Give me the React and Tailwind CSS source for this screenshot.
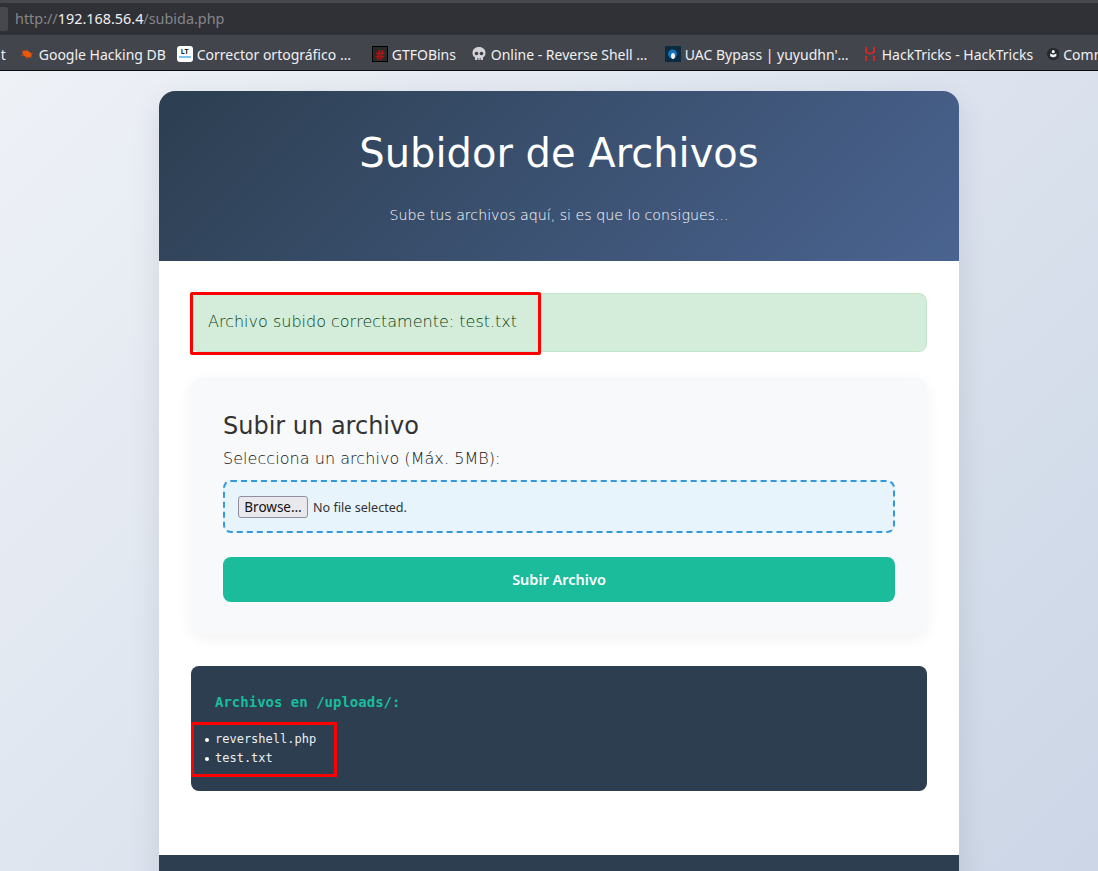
const bookmarks = [
  { label: "Google Hacking DB", icon: <BugIcon />, width: "w-[158px]" },
  { label: "Corrector ortográfico …", icon: <LtIcon />, width: "w-[195px]" },
  { label: "GTFOBins", icon: <GtfoIcon />, width: "w-[99px]" },
  { label: "Online - Reverse Shell …", icon: <SkullIcon />, width: "w-[194px]" },
  { label: "UAC Bypass | yuyudhn'…", icon: <UacIcon />, width: "w-[197px]" },
  { label: "HackTricks - HackTricks", icon: <HtIcon />, width: "w-[185px]" },
  { label: "Comm", icon: <CommIcon />, width: "w-[60px]" },
];

function BugIcon() {
  return (
    <svg viewBox="0 0 16 16" className="size-[16px]">
      <path d="M3 4l3 3M13 12l-3-3M2 10l3-1M14 7l-3 1M8 3l1 3M8 13l-1-3" stroke="#c2410c" strokeWidth="1" />
      <ellipse cx="8" cy="8" rx="5" ry="3" transform="rotate(25 8 8)" fill="#ea580c" />
    </svg>
  );
}

function LtIcon() {
  return (
    <div className="flex size-[16px] flex-col items-center rounded-[3px] bg-white pt-[2px]">
      <span className="text-[7px] font-bold leading-[7px] text-[#222]">LT</span>
      <span className="mt-[1px] h-[2px] w-[12px] bg-[#7cc4ec]" />
    </div>
  );
}

function GtfoIcon() {
  return (
    <div className="flex size-[16px] items-center justify-center border border-black bg-[#2a2a2a]">
      <span className="text-[15px] font-bold leading-none text-[#b01010]">#</span>
    </div>
  );
}

function SkullIcon() {
  return (
    <svg viewBox="0 0 16 16" className="size-[16px]">
      <path d="M8 1C4 1 1.500 3.500 1.500 7c0 2.200 1 3.600 2.500 4.400V14h8v-2.600c1.500-.8 2.500-2.200 2.500-4.400C14.500 3.500 12 1 8 1z" fill="#d4d4d8" />
      <circle cx="5.500" cy="7.500" r="1.800" fill="#3f4147" />
      <circle cx="10.500" cy="7.500" r="1.800" fill="#3f4147" />
      <path d="M6.500 12v2M8 12v2M9.500 12v2" stroke="#3f4147" strokeWidth=".6" />
    </svg>
  );
}

function UacIcon() {
  return (
    <svg viewBox="0 0 16 16" className="size-[16px]">
      <rect width="16" height="16" fill="#0b2b42" />
      <circle cx="7.500" cy="8" r="4.500" fill="#1273b8" />
      <ellipse cx="8" cy="10" rx="2" ry="3" fill="#f2f2f2" />
    </svg>
  );
}

function HtIcon() {
  return (
    <svg viewBox="0 0 16 16" className="size-[16px]">
      <path d="M4 1v5l4 2M12 1v5l-4 2M4 15v-5M12 15v-5" fill="none" stroke="#dc2626" strokeWidth="1.800" />
    </svg>
  );
}

function CommIcon() {
  return (
    <svg viewBox="0 0 16 16" className="size-[16px]">
      <circle cx="8" cy="8" r="8" fill="#26282c" />
      <circle cx="8" cy="5" r="2" fill="#f0f0f0" />
      <path d="M4 7.500l4 1.500 4-1.500V11l-4 1.500L4 11z" fill="#f0f0f0" />
    </svg>
  );
}

function BrowserBar() {
  return (
    <div className="shrink-0 font-['Noto_Sans',sans-serif]">
      <div className="h-[3px] bg-[#47484d]" />
      <div className="flex h-[32px] items-center bg-[#303136]">
        <div className="h-[24px] w-[8px] rounded-r-[3px] bg-[#47484d]" />
        <div className="ml-[7px] text-[14.400px] leading-none text-[#85868a]">
          http://<span className="text-[#f0f0f2]">192.168.56.4</span>/subida.php
        </div>
      </div>
      <div className="flex h-[36px] items-center overflow-hidden whitespace-nowrap border-b border-[#0c0c0e] bg-[#42454c] pt-[3px] text-[14px] text-[#f0f0f2]">
        <span className="ml-[-8px] mr-[13px] shrink-0">nt</span>
        {bookmarks.map((b) => (
          <div key={b.label} className={`flex shrink-0 items-center gap-[4px] ${b.width}`}>
            {b.icon}
            <span>{b.label}</span>
          </div>
        ))}
      </div>
    </div>
  );
}

export default function App() {
  return (
    <div className="flex h-[871px] w-[1098px] flex-col overflow-hidden font-['DejaVu_Sans',sans-serif]">
      <BrowserBar />
      <main className="flex-1 overflow-hidden bg-[linear-gradient(135deg,#f5f7fa_-20%,#c3cfe2_125%)] pt-[20px]">
        <div className="ml-[159px] w-[800px] overflow-hidden rounded-t-[16px] bg-white shadow-[0_10px_30px_rgba(0,0,0,0.1)]">
          <header className="h-[170px] bg-[linear-gradient(135deg,#2c3e50,#4a6491)] pt-[32px] text-center text-white">
            <h1 className="text-[40px] leading-[60px]">Subidor de Archivos</h1>
            <p className="mt-[20px] text-[14.200px] font-extralight leading-[24px]">Sube tus archivos aquí, si es que lo consigues...</p>
          </header>

          <div className="px-[32px] pt-[32px]">
            <div className="relative flex h-[59px] items-center rounded-[8px] border border-[#c3e6cb] bg-[#d4edda] px-[16px] pb-[2px] text-[16px] font-extralight text-[#063d12]">
              Archivo subido correctamente: test.txt
              <div className="absolute top-[-2px] left-[-2px] h-[63px] w-[351px] rounded-[2px] border-[3px] border-[#ff0000]" />
            </div>

            <section className="mt-[25px] h-[257px] rounded-[12px] bg-[#f8f9fa] px-[32px] pt-[33px] shadow-[0_5px_15px_rgba(0,0,0,0.05)]">
              <h2 className="text-[24px] leading-[32px] text-[#333]">Subir un archivo</h2>
              <label className="mt-[3px] block text-[16px] font-extralight leading-[28px] tracking-[0.050px] text-[#111]">Selecciona un archivo (Máx. 5MB):</label>
              <div className="mt-[7px] flex h-[53px] items-center rounded-[8px] border-2 border-dashed border-[#3498db] bg-[#e8f4fc] px-[13px] font-['Noto_Sans',sans-serif] text-[12.600px] text-[#333]">
                <button className="h-[22px] w-[70px] rounded-[3px] border border-[#8f8f9d] bg-[#e9e9ed] pt-[3px] text-[13.500px] leading-none text-[#111]">Browse…</button>
                <span className="ml-[5px] mt-[3px]">No file selected.</span>
              </div>
              <button className="mt-[24px] h-[45px] w-full rounded-[8px] bg-[#1abc9c] font-['Noto_Sans',sans-serif] text-[14.500px] font-semibold text-white">Subir Archivo</button>
            </section>

            <section className="relative mt-[32px] h-[125px] rounded-[8px] bg-[#2c3e50] px-[24px] pt-[27px] font-['DejaVu_Sans_Mono',monospace]">
              <h3 className="text-[14px] font-bold leading-[18px] text-[#1abc9c]">Archivos en /uploads/:</h3>
              <ul className="ml-[-10px] mt-[19px] text-[12px] leading-[19px] text-[#ecf0f1]">
                {["revershell.php", "test.txt"].map((name) => (
                  <li key={name} className="flex items-center gap-[6px]">
                    <span className="size-[4px] rounded-full bg-white" />
                    {name}
                  </li>
                ))}
              </ul>
              <div className="absolute top-[56px] left-[0px] h-[55px] w-[146px] border-[3px] border-[#ff0000]" />
            </section>
          </div>

          <footer className="mt-[64px] h-[60px] bg-[#2c3e50]" />
        </div>
      </main>
    </div>
  );
}
